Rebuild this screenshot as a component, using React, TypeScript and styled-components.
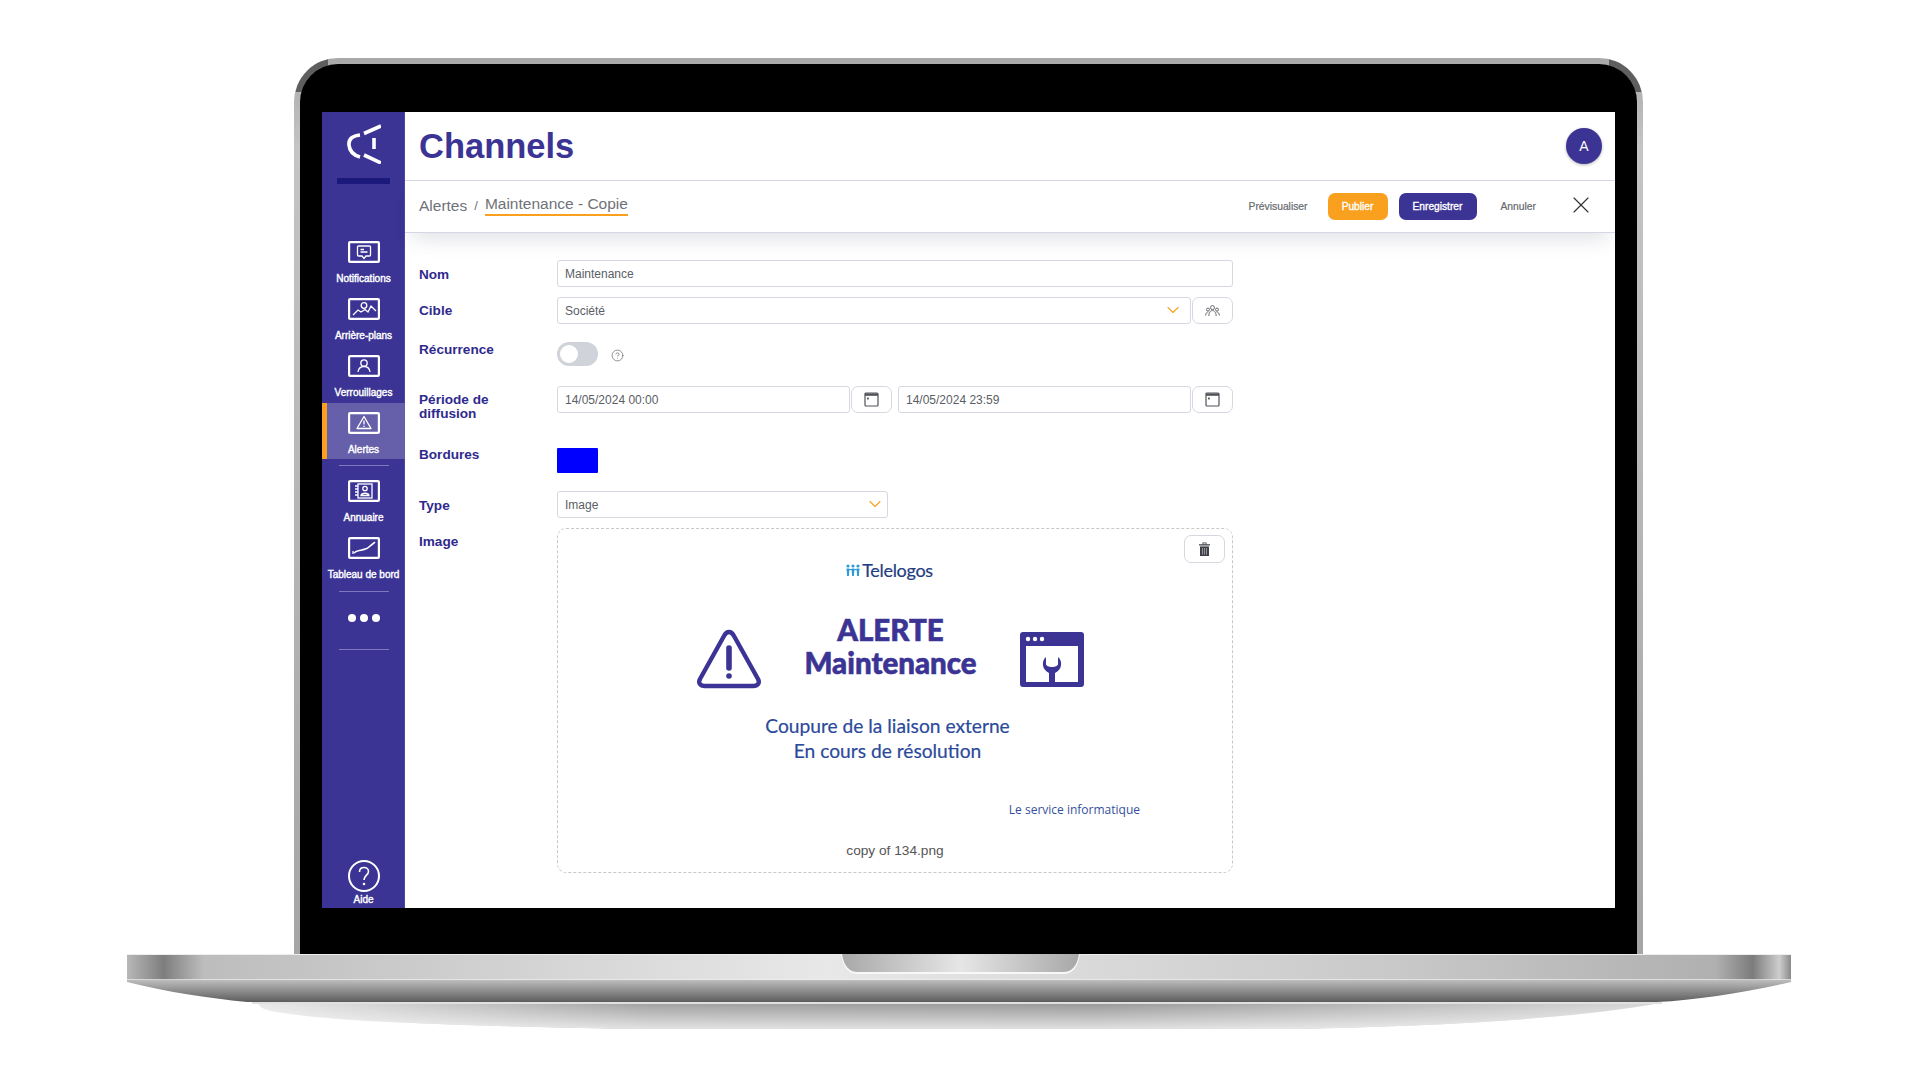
import styled, { createGlobalStyle } from "styled-components";
import { ChevronDown, X, CircleHelp } from "lucide-react";

const GlobalStyle = createGlobalStyle`
  html, body {
    margin: 0;
    padding: 0;
    background: #fff;
    font-family: "Liberation Sans", Arial, sans-serif;
  }
  * {
    box-sizing: border-box;
  }
`;

const indigo = "#3b3494";
const orange = "#f9a01f";

const Page = styled.div`
  width: 1920px;
  height: 1080px;
  padding-top: 58px;
  overflow: hidden;
  background: #fff;
`;

const Lid = styled.div`
  width: 1349px;
  height: 896px;
  margin-left: 294px;
  padding: 6px 6px 0;
  border-radius: 44px 44px 0 0;
  background:
    linear-gradient(#5f5f5f, #5f5f5f) left top / 34px 34px no-repeat,
    linear-gradient(#5f5f5f, #5f5f5f) right top / 34px 34px no-repeat,
    linear-gradient(180deg, #a9a9a9 0, #c4c4c4 90px, #a5a5a5 100%);
`;

const Bezel = styled.div`
  height: 100%;
  padding: 48px 22px 46px;
  border-radius: 38px 38px 0 0;
  background: #000;
`;

const Screen = styled.div`
  display: flex;
  height: 796px;
  background: #fff;
`;

const Sidebar = styled.nav`
  display: flex;
  flex-direction: column;
  align-items: center;
  width: 83px;
  flex: none;
  background: ${indigo};
  box-shadow: inset -1px 0 0 #4c46a3;
`;

const LogoBox = styled.div`
  height: 66px;
  padding-top: 12px;
`;

const LogoBar = styled.div`
  width: 53px;
  height: 6px;
  background: #1c197c;
  margin-bottom: 54px;
`;

const NavItem = styled.a<{ $active?: boolean }>`
  display: flex;
  flex-direction: column;
  align-items: center;
  flex: none;
  width: 100%;
  height: ${(p) => (p.$active ? 56 : 57)}px;
  padding-top: ${(p) => (p.$active ? 9 : 3)}px;
  margin-top: ${(p) => (p.$active ? -6 : 0)}px;
  background: ${(p) => (p.$active ? "#6660ab" : "transparent")};
  box-shadow: ${(p) => (p.$active ? `inset 5px 0 0 ${orange}` : "none")};
  color: #fff;
  font-size: 10px;
  line-height: 12px;
  white-space: nowrap;
  -webkit-text-stroke: 0.4px #fff;
  svg {
    display: block;
    margin-bottom: 10px;
  }
`;

const NavDivider = styled.div<{ $before?: number; $after?: number }>`
  width: 50px;
  height: 1px;
  flex: none;
  background: #7e79bd;
  margin: ${(p) => p.$before ?? 6}px 0 ${(p) => p.$after ?? 11}px;
`;

const MoreDots = styled.div`
  display: flex;
  gap: 4px;
  margin: 8px 0 21px;
  span {
    width: 8px;
    height: 8px;
    border-radius: 50%;
    background: #fff;
  }
`;

const HelpItem = styled(NavItem)`
  margin-top: auto;
  height: 48px;
  padding-top: 0;
  svg {
    margin-bottom: 2px;
  }
`;

const Main = styled.main`
  flex: 1;
  display: flex;
  flex-direction: column;
  min-width: 0;
`;

const TitleBar = styled.header`
  display: flex;
  align-items: center;
  justify-content: space-between;
  height: 69px;
  padding: 0 13px 0 14px;
  border-bottom: 1px solid #d5d8e4;
`;

const Title = styled.h1`
  margin: 0;
  color: ${indigo};
  font-size: 34.5px;
  font-weight: 700;
  line-height: 1;
`;

const Avatar = styled.div`
  display: flex;
  align-items: center;
  justify-content: center;
  width: 36px;
  height: 36px;
  border-radius: 50%;
  background: ${indigo};
  color: #fff;
  font-size: 14px;
  box-shadow: 0 1px 3px rgba(0, 0, 0, 0.3);
`;

const ActionBar = styled.div`
  position: relative;
  display: flex;
  align-items: center;
  justify-content: space-between;
  height: 52px;
  padding: 0 20px 0 14px;
  border-bottom: 1px solid #d5d8e4;
  box-shadow: 0 14px 20px -8px rgba(60, 70, 100, 0.16);
`;

const Crumbs = styled.div`
  display: flex;
  align-items: center;
  padding-bottom: 2px;
  color: #6f7278;
  font-size: 15.5px;
`;

const CrumbSep = styled.span`
  margin: 0 7px 0 7px;
  font-size: 13px;
`;

const CrumbCurrent = styled.span`
  padding-bottom: 1px;
  border-bottom: 2px solid ${orange};
  line-height: 18px;
`;

const Actions = styled.div`
  display: flex;
  align-items: center;
  svg {
    margin-top: -3px;
  }
`;

const LinkButton = styled.span`
  color: #666a70;
  font-size: 10.3px;
  -webkit-text-stroke: 0.2px #666a70;
`;

const SolidButton = styled.button<{ $color: string; $width: number }>`
  width: ${(p) => p.$width}px;
  height: 27px;
  border: 0;
  padding: 0;
  border-radius: 7px;
  background: ${(p) => p.$color};
  color: #fff;
  font-family: inherit;
  font-size: 10.2px;
  -webkit-text-stroke: 0.35px #fff;
  margin-left: ${(p) => (p.$width === 60 ? 20 : 11)}px;
`;

const CancelButton = styled(LinkButton)`
  margin: 0 31px 0 24px;
`;

const FormArea = styled.div`
  display: grid;
  grid-template-columns: 138px 676px;
  padding: 27px 0 0 14px;
  color: #2f2a8c;
`;

const Label = styled.label<{ $top: number; $height: number }>`
  height: ${(p) => p.$height}px;
  padding-top: ${(p) => p.$top}px;
  font-size: 13.6px;
  font-weight: 700;
  line-height: 14px;
`;

const Cell = styled.div<{ $height: number }>`
  display: flex;
  height: ${(p) => p.$height}px;
`;

const TextBox = styled.div<{ $width?: number; $end?: number }>`
  display: flex;
  align-items: center;
  justify-content: space-between;
  flex: ${(p) => (p.$width ? "none" : "1")};
  width: ${(p) => (p.$width ? `${p.$width}px` : "auto")};
  height: 27px;
  padding: 0 ${(p) => p.$end ?? 10}px 0 7px;
  border: 1px solid #d5d8e0;
  border-radius: 3px;
  color: #5a5e65;
  font-size: 12px;
  svg {
    margin-top: -2px;
  }
`;

const SideButton = styled.div<{ $gap?: number }>`
  display: flex;
  align-items: center;
  justify-content: center;
  width: 41px;
  height: 27px;
  flex: none;
  margin: 0 ${(p) => p.$gap ?? 0}px 0 1px;
  border: 1px solid #d5d8e0;
  border-radius: 7px;
  color: #55585e;
`;

const Toggle = styled.div`
  width: 41px;
  height: 24px;
  padding: 3px;
  border-radius: 12px;
  background: #d0d3da;
  &::before {
    content: "";
    display: block;
    width: 18px;
    height: 18px;
    border-radius: 50%;
    background: #fff;
  }
`;

const ToggleHelp = styled.span`
  display: flex;
  margin: 7px 0 0 13px;
  height: 13px;
  color: #666;
`;

const Swatch = styled.div`
  width: 41px;
  height: 25px;
  border-radius: 1px;
  background: #0000ff;
`;

const DropZone = styled.div`
  position: relative;
  display: flex;
  flex-direction: column;
  align-items: center;
  width: 676px;
  height: 345px;
  padding-top: 30px;
  border: 1px dashed #c8c8c8;
  border-radius: 9px;
`;

const TrashButton = styled(SideButton)`
  position: absolute;
  top: 6px;
  right: 7px;
  height: 28px;
  margin: 0;
`;

const Brand = styled.div`
  display: flex;
  align-items: center;
  gap: 2px;
  margin-left: -11px;
  color: #1f3d7f;
  font-family: Lato, sans-serif;
  font-size: 18px;
  line-height: 22px;
  letter-spacing: -0.3px;
  -webkit-text-stroke: 0.2px #1f3d7f;
`;

const AlertRow = styled.div`
  display: flex;
  align-items: flex-start;
  gap: 42px;
  margin: 32px 0 0 -9px;
`;

const AlertArt = styled.svg<{ $top: number }>`
  display: block;
  flex: none;
  margin-top: ${(p) => p.$top}px;
`;

const AlertTitle = styled.div`
  width: 175px;
  color: ${indigo};
  font-family: Lato, sans-serif;
  font-size: 29.5px;
  font-weight: 900;
  line-height: 33px;
  text-align: center;
  white-space: nowrap;
  -webkit-text-stroke: 0.6px ${indigo};
`;

const Message = styled.div`
  margin: 24px 0 0 -15px;
  color: #2b4a9a;
  font-family: Lato, sans-serif;
  font-size: 19.2px;
  line-height: 25px;
  text-align: center;
  -webkit-text-stroke: 0.2px #2b4a9a;
`;

const Signature = styled.div`
  align-self: flex-end;
  margin: 39px 92px 0 0;
  color: #34509c;
  font-family: "Open Sans", sans-serif;
  font-size: 12px;
  line-height: 16px;
`;

const FileName = styled.div`
  margin-top: 25px;
  color: #555;
  font-size: 13.7px;
  line-height: 16px;
`;

const BaseArt = styled.svg`
  display: block;
  margin-left: 127px;
`;

// sidebar glyphs: every one sits in the same 32x22 outlined frame
function Framed({ children }: { children: React.ReactNode }) {
  return (
    <svg width="32" height="22" viewBox="0 0 32 22" fill="none" stroke="#fff" strokeWidth="1.3">
      <rect x="1.1" y="1.1" width="29.8" height="19.8" rx="1" strokeWidth="2.2" />
      {children}
    </svg>
  );
}

const Logo = () => (
  <svg width="34" height="40" viewBox="0 0 34 40" fill="none" stroke="#fff" strokeWidth="3.6">
    <path d="M13 11 C4 12 1.5 16 2 21 C2.5 27 6 31 13 33" />
    <path d="M34 2 L17 9.5" />
    <path d="M27 14 V25" />
    <path d="M17 31 L34 39" />
  </svg>
);

const DateIcon = () => (
  <svg width="15" height="15" viewBox="0 0 15 15" fill="none" stroke="#4f5258" strokeWidth="1.2">
    <rect x="1" y="1" width="13" height="13" rx="1" />
    <path d="M1 2.6 H14" strokeWidth="2.4" />
    <rect x="3" y="5.6" width="1.8" height="1.8" fill="#4f5258" stroke="none" />
  </svg>
);

const GroupIcon = () => (
  <svg width="15" height="12" viewBox="0 0 15 12" fill="none" stroke="#66686e" strokeWidth="1">
    <circle cx="7.5" cy="2.6" r="2" />
    <circle cx="3" cy="4.6" r="1.5" />
    <circle cx="12" cy="4.6" r="1.5" />
    <path d="M3.8 11 C4 7 6 5.5 7.5 5.5 C9 5.5 11 7 11.2 11" />
    <path d="M0.6 10.5 C0.8 8 2 7 3.4 7 M14.4 10.5 C14.2 8 13 7 11.6 7" />
  </svg>
);

const TrashIcon = () => (
  <svg width="11" height="14" viewBox="0 0 11 14">
    <path d="M0 2.2 H11 V3.6 H0 Z M3.5 2.2 V0.5 H7.5 V2.2 H6.6 V1.3 H4.4 V2.2 Z" fill="#3f4146" />
    <path d="M1 4.4 H10 V14 H1 Z" fill="#3f4146" />
    <path d="M3.5 6 V12.6 M5.5 6 V12.6 M7.5 6 V12.6" stroke="#a8a8ac" strokeWidth="0.8" />
  </svg>
);

const BrandMark = () => (
  <svg width="14" height="12" viewBox="0 0 14 12" fill="#2f9ad6">
    <circle cx="2" cy="2" r="1.6" />
    <circle cx="7" cy="2" r="1.6" />
    <circle cx="12" cy="2" r="1.6" />
    <path d="M0.6 4.4 H3.4 L2.9 12 H1.1 Z M5.6 4.4 H8.4 L7.9 12 H6.1 Z M10.6 4.4 H13.4 L12.9 12 H11.1 Z" />
    <rect x="0.6" y="5" width="12.8" height="1.2" />
  </svg>
);

const WarningArt = () => (
  <AlertArt $top={16} width="64" height="60" viewBox="0 0 64 60" fill="none" stroke={indigo} strokeWidth="4.4" strokeLinejoin="round">
    <path d="M32 3 C29 3 28 5 27 7 L3 50 C1 54 3 57 8 57 H56 C61 57 63 54 61 50 L37 7 C36 5 35 3 32 3 Z" />
    <path d="M32 19 V39" strokeWidth="5.6" strokeLinecap="round" />
    <circle cx="32" cy="47" r="2.8" fill={indigo} stroke="none" />
  </AlertArt>
);

const WindowArt = () => (
  <AlertArt $top={19} width="64" height="55" viewBox="0 0 64 55" fill={indigo}>
    <path d="M3 0 H61 A3 3 0 0 1 64 3 V52 A3 3 0 0 1 61 55 H3 A3 3 0 0 1 0 52 V3 A3 3 0 0 1 3 0 Z M6 14 V50 H58 V14 Z" fillRule="evenodd" />
    <circle cx="8" cy="7" r="2.2" fill="#fff" />
    <circle cx="15" cy="7" r="2.2" fill="#fff" />
    <circle cx="22" cy="7" r="2.2" fill="#fff" />
    <path d="M26 25 C21 29 22 38 29 41 V50 H35 V41 C42 38 43 29 38 25 V32 C38 34 35 35 32 35 C29 35 26 34 26 32 Z" />
  </AlertArt>
);

const LaptopBase = () => (
  <BaseArt width="1664" height="76" viewBox="0 0 1664 76">
    <defs>
      <linearGradient id="band" x1="0" x2="1" y1="0" y2="0">
        <stop offset="0" stopColor="#b8b8b8" />
        <stop offset="0.022" stopColor="#7e7e7e" />
        <stop offset="0.046" stopColor="#bdbdbd" />
        <stop offset="0.42" stopColor="#e8e8e8" />
        <stop offset="0.75" stopColor="#cacaca" />
        <stop offset="0.955" stopColor="#b0b0b0" />
        <stop offset="0.977" stopColor="#7c7c7c" />
        <stop offset="0.993" stopColor="#cdcdcd" />
        <stop offset="1" stopColor="#8a8a8a" />
      </linearGradient>
      <linearGradient id="lip" x1="0" x2="0" y1="0" y2="1">
        <stop offset="0" stopColor="#bdbdbd" />
        <stop offset="1" stopColor="#5c5c5c" />
      </linearGradient>
      <linearGradient id="foot" x1="0" x2="1" y1="0" y2="0">
        <stop offset="0" stopColor="#e8e8e8" />
        <stop offset="0.28" stopColor="#a0a0a0" />
        <stop offset="0.6" stopColor="#989898" />
        <stop offset="1" stopColor="#d6d6d6" />
      </linearGradient>
      <linearGradient id="fade" x1="0" x2="0" y1="0" y2="1">
        <stop offset="0" stopColor="#fff" stopOpacity="0" />
        <stop offset="1" stopColor="#fff" stopOpacity="0.7" />
      </linearGradient>
      <linearGradient id="notch" x1="0" x2="1" y1="0" y2="0">
        <stop offset="0" stopColor="#a8a8a8" />
        <stop offset="0.5" stopColor="#e6e6e6" />
        <stop offset="1" stopColor="#a8a8a8" />
      </linearGradient>
    </defs>
    <path d="M131 49 H1534 C1440 66 1300 72 1170 75 H500 C350 72 190 68 140 56 C134 54 132 52 131 49 Z" fill="url(#foot)" />
    <path d="M131 49 H1534 C1440 66 1300 72 1170 75 H500 C350 72 190 68 140 56 C134 54 132 52 131 49 Z" fill="url(#fade)" />
    <path d="M0 26 H1664 V28 C1620 38 1570 46 1530 48 H120 C80 44 40 38 0 28 Z" fill="url(#lip)" />
    <rect x="125" y="48" width="1410" height="2" fill="#e0e0e0" />
    <rect x="0" y="0" width="1664" height="26" fill="url(#band)" />
    <rect x="0" y="0" width="1664" height="1" fill="#eeeeee" />
    <rect x="0" y="25" width="1664" height="1" fill="#f0f0f0" opacity="0.7" />
    <path d="M714 0 H953 C951 13 946 20 936 20 H731 C721 20 716 13 714 0 Z" fill="#f8f8f8" />
    <path d="M715 0 H952 C950 12 945 18 936 18 H731 C722 18 717 12 715 0 Z" fill="url(#notch)" />
  </BaseArt>
);

export default function App() {
  return (
    <Page>
      <GlobalStyle />
      <Lid>
        <Bezel>
          <Screen>
            <Sidebar>
              <LogoBox>
                <Logo />
              </LogoBox>
              <LogoBar />
              <NavItem>
                <Framed>
                  <path d="M10.5 5 H21.5 A1 1 0 0 1 22.5 6 V14 A1 1 0 0 1 21.5 15 H18 L16 17.5 L14 15 H10.5 A1 1 0 0 1 9.5 14 V6 A1 1 0 0 1 10.5 5 Z" />
                  <path d="M12.5 8.5 H16 M12.5 11 H19.5" />
                </Framed>
                Notifications
              </NavItem>
              <NavItem>
                <Framed>
                  <circle cx="16" cy="7.5" r="2.8" />
                  <path d="M5 17 L10 12 L13 14 L17 11.5 L20 14 L23 8 L28 13" />
                </Framed>
                Arrière-plans
              </NavItem>
              <NavItem>
                <Framed>
                  <circle cx="16" cy="8" r="3.2" />
                  <path d="M10 17 C10.5 13 13 11.5 16 11.5 C19 11.5 21.5 13 22 17" />
                </Framed>
                Verrouillages
              </NavItem>
              <NavItem $active>
                <Framed>
                  <path d="M16 4.5 L23 16.5 H9 Z" strokeLinejoin="round" />
                  <path d="M16 8.5 V12.5 M16 13.8 V15" />
                </Framed>
                Alertes
              </NavItem>
              <NavDivider />
              <NavItem>
                <Framed>
                  <rect x="10" y="4" width="14" height="14" />
                  <path d="M7 6 H10 M7 9 H10 M7 12 H10 M7 15 H10" />
                  <circle cx="17" cy="8.5" r="2.2" />
                  <path d="M13 15.5 C13.5 12.5 20.5 12.5 21 15.5 Z" />
                </Framed>
                Annuaire
              </NavItem>
              <NavItem>
                <Framed>
                  <path d="M5 17 V14" />
                  <path d="M6 16 C9 13 11 14 14 13 C17 12 19 12 21 10 C23 8 25 7 27 5" strokeWidth="1.6" />
                </Framed>
                Tableau de bord
              </NavItem>
              <NavDivider $before={0} $after={14} />
              <MoreDots>
                <span />
                <span />
                <span />
              </MoreDots>
              <NavDivider />
              <HelpItem>
                <svg width="32" height="32" viewBox="0 0 32 32" fill="none" stroke="#fff" strokeWidth="2">
                  <circle cx="16" cy="16" r="15" />
                  <path d="M11.5 12 C11.5 9 13.5 7.5 16 7.5 C18.5 7.5 20.5 9.2 20.5 11.5 C20.5 15 16 15.5 16 20" strokeWidth="1.6" />
                  <circle cx="16" cy="24" r="1.3" fill="#fff" stroke="none" />
                </svg>
                Aide
              </HelpItem>
            </Sidebar>
            <Main>
              <TitleBar>
                <Title>Channels</Title>
                <Avatar>A</Avatar>
              </TitleBar>
              <ActionBar>
                <Crumbs>
                  Alertes
                  <CrumbSep>/</CrumbSep>
                  <CrumbCurrent>Maintenance - Copie</CrumbCurrent>
                </Crumbs>
                <Actions>
                  <LinkButton>Prévisualiser</LinkButton>
                  <SolidButton $color={orange} $width={60}>
                    Publier
                  </SolidButton>
                  <SolidButton $color={indigo} $width={78}>
                    Enregistrer
                  </SolidButton>
                  <CancelButton>Annuler</CancelButton>
                  <X size={28} color="#333" strokeWidth={1} />
                </Actions>
              </ActionBar>
              <FormArea>
                <Label $top={8} $height={37}>Nom</Label>
                <Cell $height={37}>
                  <TextBox>Maintenance</TextBox>
                </Cell>
                <Label $top={7} $height={45}>Cible</Label>
                <Cell $height={45}>
                  <TextBox $end={7}>
                    Société
                    <ChevronDown size={20} color={orange} strokeWidth={1.3} />
                  </TextBox>
                  <SideButton>
                    <GroupIcon />
                  </SideButton>
                </Cell>
                <Label $top={1} $height={44}>Récurrence</Label>
                <Cell $height={44}>
                  <Toggle />
                  <ToggleHelp>
                    <CircleHelp size={13} strokeWidth={1.3} />
                  </ToggleHelp>
                </Cell>
                <Label $top={7} $height={62}>
                  Période de
                  <br />
                  diffusion
                </Label>
                <Cell $height={62}>
                  <TextBox>14/05/2024 00:00</TextBox>
                  <SideButton $gap={6}>
                    <DateIcon />
                  </SideButton>
                  <TextBox>14/05/2024 23:59</TextBox>
                  <SideButton>
                    <DateIcon />
                  </SideButton>
                </Cell>
                <Label $top={0} $height={43}>Bordures</Label>
                <Cell $height={43}>
                  <Swatch />
                </Cell>
                <Label $top={8} $height={37}>Type</Label>
                <Cell $height={37}>
                  <TextBox $width={331} $end={2}>
                    Image
                    <ChevronDown size={20} color={orange} strokeWidth={1.3} />
                  </TextBox>
                </Cell>
                <Label $top={7} $height={345}>Image</Label>
                <DropZone>
                  <TrashButton>
                    <TrashIcon />
                  </TrashButton>
                  <Brand>
                    <BrandMark />
                    Telelogos
                  </Brand>
                  <AlertRow>
                    <WarningArt />
                    <AlertTitle>
                      ALERTE
                      <br />
                      Maintenance
                    </AlertTitle>
                    <WindowArt />
                  </AlertRow>
                  <Message>
                    Coupure de la liaison externe
                    <br />
                    En cours de résolution
                  </Message>
                  <Signature>Le service informatique</Signature>
                  <FileName>copy of 134.png</FileName>
                </DropZone>
              </FormArea>
            </Main>
          </Screen>
        </Bezel>
      </Lid>
      <LaptopBase />
    </Page>
  );
}
